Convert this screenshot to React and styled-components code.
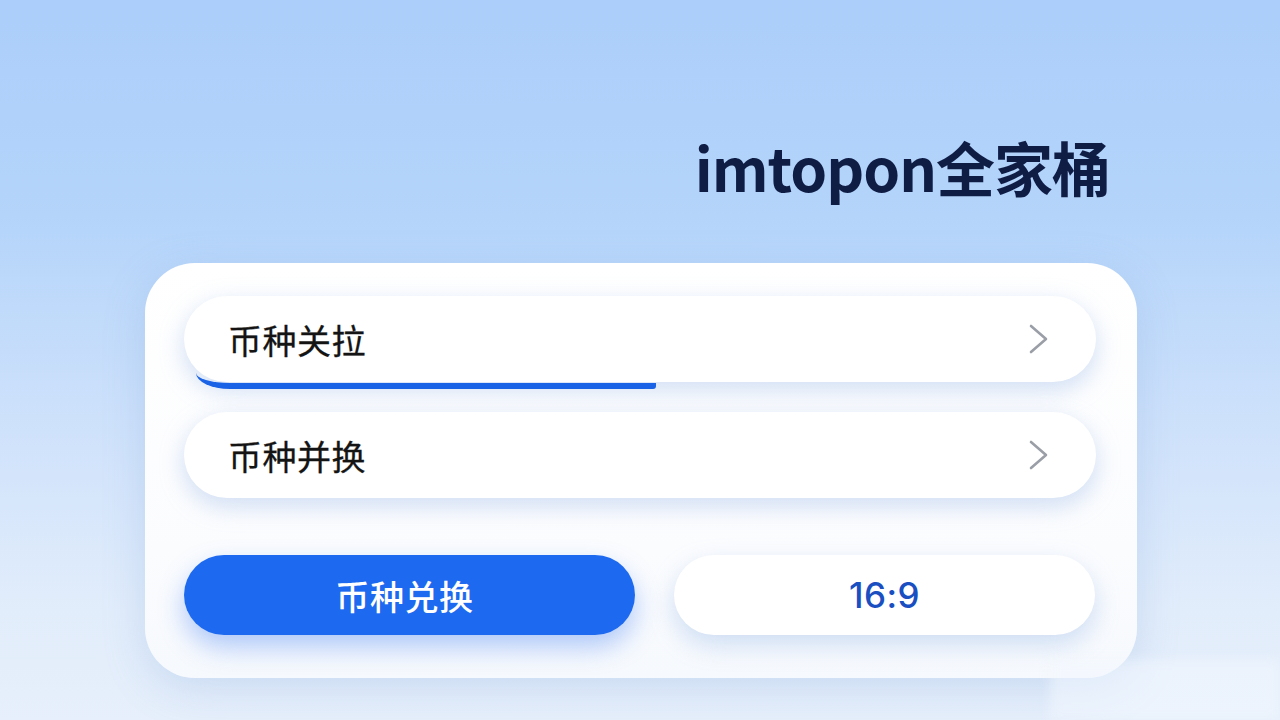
import React from "react";
import styled, { createGlobalStyle } from "styled-components";

const GlobalStyle = createGlobalStyle`
  html, body { margin: 0; padding: 0; }
  body {
    font-family: "Noto Sans CJK SC", "Noto Sans", sans-serif;
    -webkit-font-smoothing: antialiased;
  }
`;

const Page = styled.div`
  position: relative;
  width: 1280px;
  height: 720px;
  overflow: hidden;
  background: linear-gradient(180deg, #abcefa 0%, #b4d4fa 30%, #cfe2fb 60%, #e2edfb 85%, #e6effb 100%);
  display: flex;
  flex-direction: column;
`;

const Header = styled.div`
  display: flex;
  justify-content: flex-end;
  align-items: flex-start;
  height: 263px;
  padding: 128px 170px 0 0;
  box-sizing: border-box;
`;

const Title = styled.h1`
  margin: 0;
  font-family: "Noto Sans CJK SC", "Noto Sans", sans-serif;
  font-size: 59px;
  font-weight: 700;
  line-height: 78px;
  letter-spacing: -1px;
  color: #0f1d45;
`;

const Card = styled.section`
  margin-left: 145px;
  width: 992px;
  height: 415px;
  box-sizing: border-box;
  border-radius: 50px;
  background: linear-gradient(180deg, #ffffff 0%, #fbfcfe 70%, #f6f9fd 100%);
  box-shadow: 0 10px 40px rgba(120, 160, 220, 0.25);
  padding: 33px 41px 0 39px;
  display: flex;
  flex-direction: column;
`;

const Row = styled.div`
  position: relative;
  height: 86px;
  border-radius: 43px;
  background: #ffffff;
  box-shadow: 0 8px 24px rgba(140, 175, 228, 0.4);
  display: flex;
  align-items: center;
  justify-content: space-between;
  padding: 0 46px 0 44px;
  margin-bottom: ${(p) => p.$gap}px;
`;

const RowLabel = styled.span`
  font-size: 34px;
  font-weight: 400;
  color: #141414;
  letter-spacing: 0.5px;
  -webkit-text-stroke: 0.3px #141414;
`;

const Progress = styled.div`
  position: absolute;
  left: 12px;
  bottom: -7px;
  width: 460px;
  height: 16px;
  box-sizing: border-box;
  border-bottom: 6px solid #1a63e6;
  border-bottom-left-radius: 34px 16px;
  border-bottom-right-radius: 3px;
`;

const Actions = styled.div`
  display: grid;
  grid-template-columns: 451px 421px;
  gap: 39px;
  margin-top: 57px;
`;

const Pill = styled.button`
  height: 80px;
  border: none;
  border-radius: 40px;
  font-family: ${(p) =>
    p.$primary ? `"Noto Sans CJK SC", "Noto Sans", sans-serif` : `Inter, "Noto Sans", sans-serif`};
  font-size: ${(p) => (p.$primary ? 34 : 35)}px;
  font-weight: 500;
  letter-spacing: 0.5px;
  color: ${(p) => (p.$primary ? "#ffffff" : "#1a4fc2")};
  background: ${(p) => (p.$primary ? "#1d69ef" : "#ffffff")};
  box-shadow: ${(p) =>
    p.$primary
      ? "0 12px 26px rgba(40, 110, 240, 0.35)"
      : "0 10px 24px rgba(140, 175, 228, 0.38)"};
  display: flex;
  align-items: center;
  justify-content: center;
  padding: ${(p) => (p.$primary ? "0 10px 0 0" : "0")};
`;

const Haze = styled.div`
  position: absolute;
  right: 0;
  bottom: 0;
  width: 230px;
  height: 60px;
  background: rgba(243, 248, 255, 0.55);
  filter: blur(6px);
`;

const Chevron = () => (
  <svg width="22" height="32" viewBox="0 0 22 32" fill="none">
    <path d="M3 3 L18 16 L3 29" stroke="#9a9ea6" strokeWidth="2.6" strokeLinecap="round" strokeLinejoin="round" />
  </svg>
);

export default function App() {
  return (
    <Page>
      <GlobalStyle />
      <Header>
        <Title>imtopon全家桶</Title>
      </Header>
      <Card>
        <Row $gap={30}>
          <RowLabel>币种关拉</RowLabel>
          <Chevron />
          <Progress />
        </Row>
        <Row $gap={0}>
          <RowLabel>币种并换</RowLabel>
          <Chevron />
        </Row>
        <Actions>
          <Pill $primary>币种兑换</Pill>
          <Pill>16:9</Pill>
        </Actions>
      </Card>
      <Haze />
    </Page>
  );
}
